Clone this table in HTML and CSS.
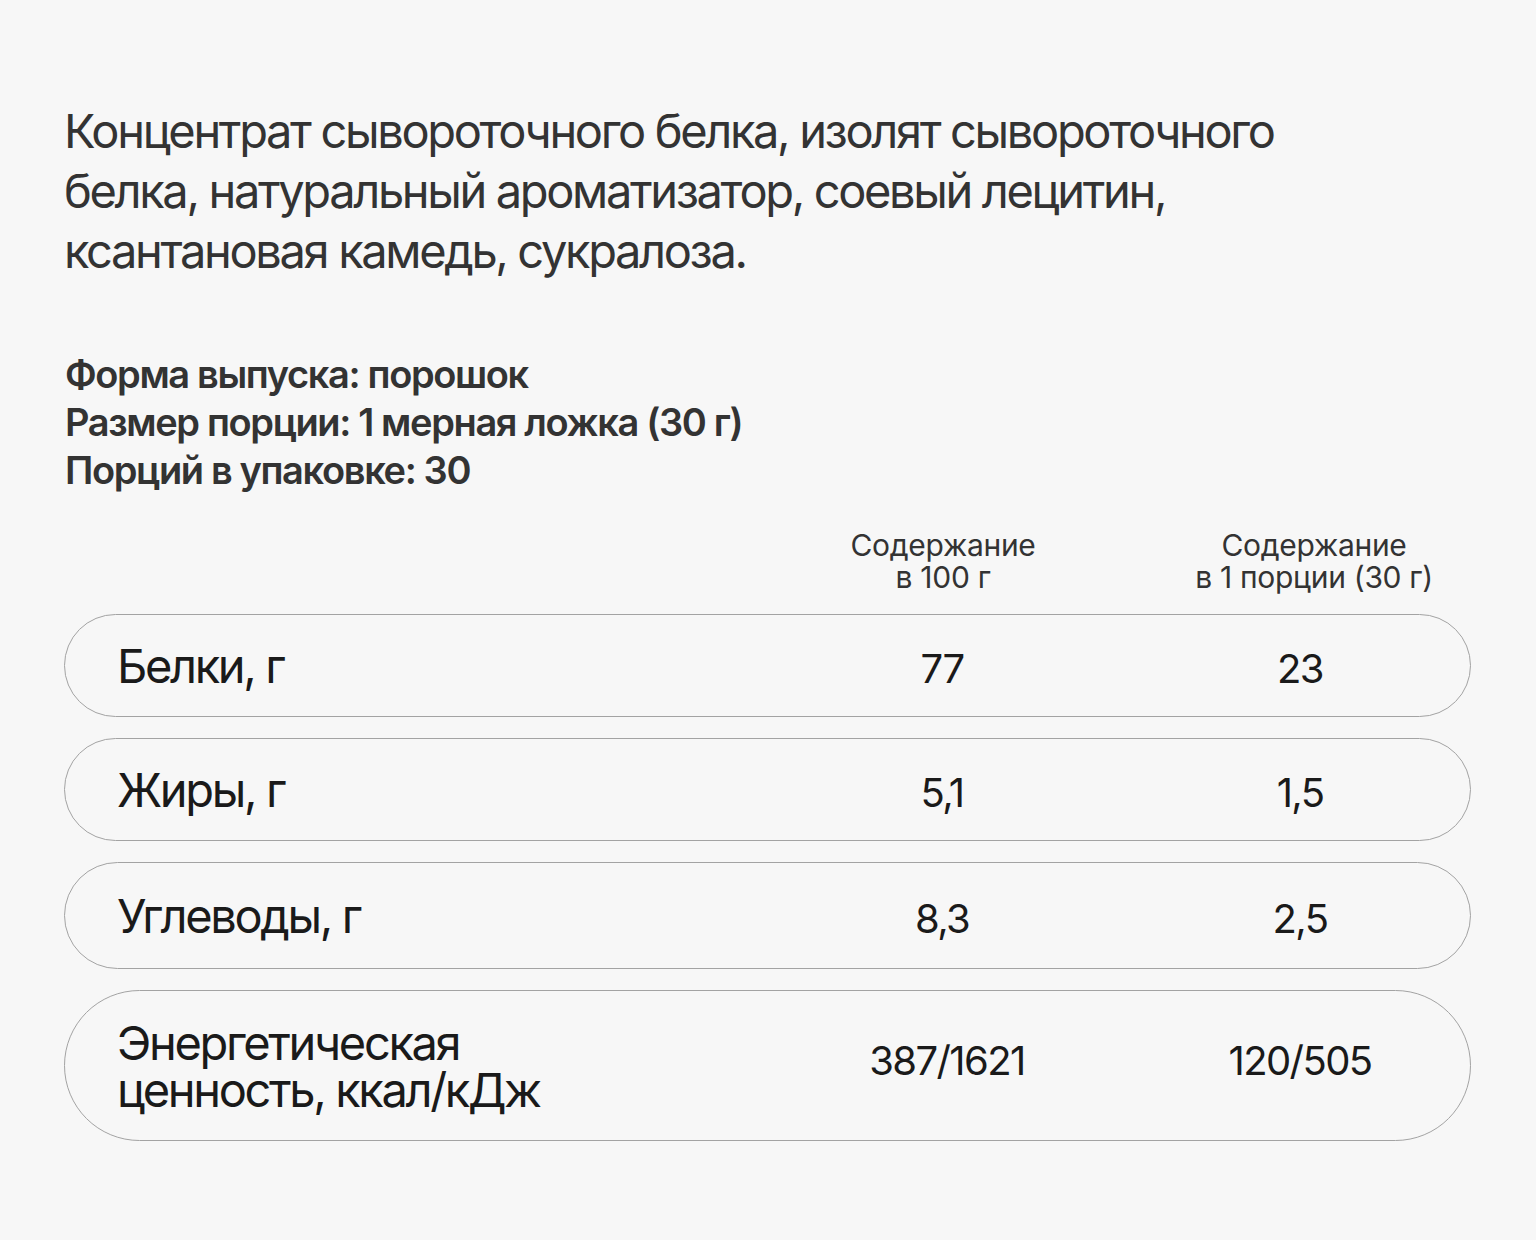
FILE: index.html
```html
<!DOCTYPE html>
<html lang="ru">
<head>
<meta charset="utf-8">
<link rel="stylesheet" href="styles.css">
</head>
<body>
<main class="page">
  <p class="composition">Концентрат сывороточного белка, изолят сывороточного белка, натуральный ароматизатор, соевый лецитин, ксантановая камедь, сукралоза.</p>
  <div class="facts">
    <div>Форма выпуска: порошок</div>
    <div>Размер порции: 1 мерная ложка (30 г)</div>
    <div>Порций в упаковке: 30</div>
  </div>
  <div class="table">
    <div class="head">
      <div></div>
      <div class="hcell">Содержание<br>в 100 г</div>
      <div class="hcell hcell-2">Содержание<br>в 1 порции (30 г)</div>
    </div>
    <div class="row">
      <div class="label">Белки, г</div>
      <div class="val">77</div>
      <div class="val">23</div>
    </div>
    <div class="row">
      <div class="label">Жиры, г</div>
      <div class="val">5,1</div>
      <div class="val">1,5</div>
    </div>
    <div class="row row-mid">
      <div class="label">Углеводы, г</div>
      <div class="val">8,3</div>
      <div class="val">2,5</div>
    </div>
    <div class="row row-tall">
      <div class="label">Энергетическая<br>ценность, ккал/кДж</div>
      <div class="val">387/1621</div>
      <div class="val">120/505</div>
    </div>
  </div>
</main>
</body>
</html>
```

FILE: styles.css
```css
html, body {
  margin: 0;
  padding: 0;
  background: #f7f7f7;
}
body {
  font-family: Inter, "Noto Sans", sans-serif;
  color: #333;
}
.page {
  width: 1536px;
  height: 1240px;
  box-sizing: border-box;
  padding: 101px 65px 0 64px;
}
.composition {
  margin: 0;
  font-size: 47px;
  line-height: 60px;
  letter-spacing: -0.05em;
  color: #333;
  max-width: 1240px;
}
.facts {
  margin-top: 69px;
  font-size: 38px;
  line-height: 48px;
  font-weight: 600;
  letter-spacing: -0.036em;
  color: #333;
  padding-left: 1px;
}
.table {
  margin-top: 35px;
  display: flex;
  flex-direction: column;
  gap: 21px;
}
.head, .row {
  display: grid;
  grid-template-columns: 1fr 340px 340px;
  column-gap: 18px;
}
.hcell {
  text-align: center;
  font-size: 30px;
  line-height: 32px;
  letter-spacing: -0.01em;
  color: #333;
}
.hcell-2 {
  padding-left: 26px;
}
.row {
  height: 103px;
  box-sizing: border-box;
  border: 1.5px solid #a3a3a3;
  border-radius: 80px;
  padding-left: 52px;
  align-items: center;
  color: #1a1a1a;
}
.row-mid {
  height: 107px;
}
.row-tall {
  height: 151px;
}
.label {
  font-size: 47px;
  line-height: 47px;
  letter-spacing: -0.05em;
}
.val {
  text-align: center;
  font-size: 40px;
  line-height: 47px;
  letter-spacing: -0.04em;
  padding-top: 6px;
}
.row-tall .val {
  padding-top: 0;
  padding-bottom: 10px;
}
.row-tall .val:nth-child(2) {
  padding-left: 10px;
}
```
